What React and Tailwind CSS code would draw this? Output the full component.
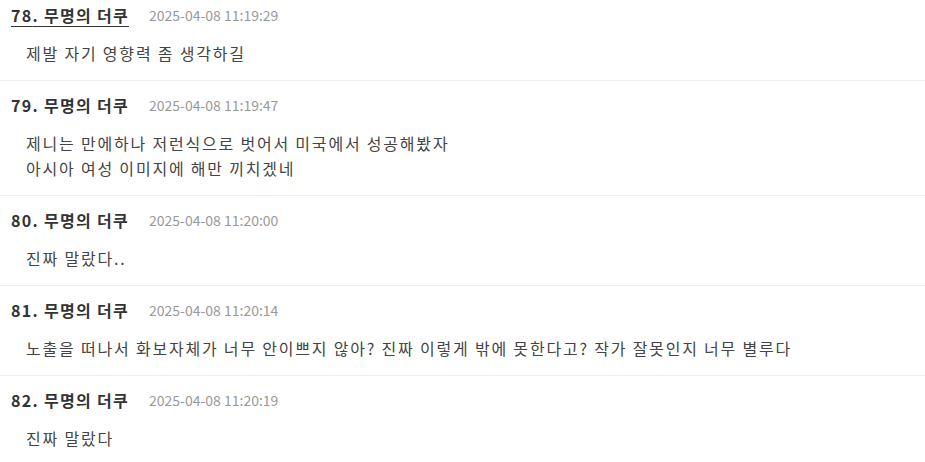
const comments = [
  { no: 78, name: '무명의 더쿠', time: '2025-04-08 11:19:29', lines: ['제발 자기 영향력 좀 생각하길'], hover: true },
  { no: 79, name: '무명의 더쿠', time: '2025-04-08 11:19:47', lines: ['제니는 만에하나 저런식으로 벗어서 미국에서 성공해봤자', '아시아 여성 이미지에 해만 끼치겠네'] },
  { no: 80, name: '무명의 더쿠', time: '2025-04-08 11:20:00', lines: ['진짜 말랐다..'] },
  { no: 81, name: '무명의 더쿠', time: '2025-04-08 11:20:14', lines: ['노출을 떠나서 화보자체가 너무 안이쁘지 않아? 진짜 이렇게 밖에 못한다고? 작가 잘못인지 너무 별루다'] },
  { no: 82, name: '무명의 더쿠', time: '2025-04-08 11:20:19', lines: ['진짜 말랐다'] },
]

const Comment = ({ c }) => (
  <li className="border-b border-[#eeeeee] pt-[13px] pb-[14px]">
    <div className="flex items-center h-[22px] pl-[11px]">
      <span className={`text-[16px] font-bold tracking-[1.3px] text-[#333] ${c.hover ? 'underline underline-offset-4' : ''}`}>
        {c.no}. {c.name}
      </span>
      <span className="ml-[20px] text-[14px] text-[#999]">{c.time}</span>
    </div>
    <div className="mt-[15px] pl-[26px] text-[16px] leading-[25px] tracking-[1.8px] text-[#444]">
      {c.lines.map((l, i) => (
        <p key={i}>{l}</p>
      ))}
    </div>
  </li>
)

export default function App() {
  return (
    <div
      className="w-[925px] h-[462px] overflow-hidden bg-white"
      style={{ fontFamily: '"Noto Sans CJK KR", "Noto Sans", sans-serif' }}
    >
      <ul className="-mt-[9px]">
        {comments.map(c => (
          <Comment key={c.no} c={c} />
        ))}
      </ul>
    </div>
  )
}
